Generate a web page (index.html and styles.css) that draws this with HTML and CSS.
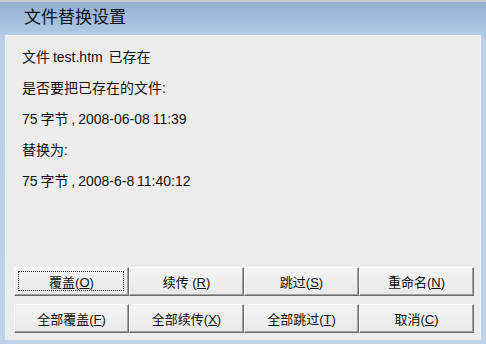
FILE: index.html
```html
<!DOCTYPE html>
<html lang="zh-CN">
<head>
    <meta charset="UTF-8">
    <title>文件替换设置</title>
    <link rel="stylesheet" href="styles.css">
</head>
<body>

    <div class="window">
        <div class="title-bar">文件替换设置</div>

        <div class="panel">
            <div class="messages">
                <p>文件 test.htm &nbsp;已存在</p>
                <p>是否要把已存在的文件:</p>
                <p>75 字节 , 2008-06-08 11:39</p>
                <p>替换为:</p>
                <p>75 字节 , 2008-6-8 11:40:12</p>
            </div>

            <!-- Action buttons -->
            <div class="buttons">
                <button class="btn focused">覆盖(<u>O</u>)</button>
                <button class="btn">续传 (<u>R</u>)</button>
                <button class="btn">跳过(<u>S</u>)</button>
                <button class="btn">重命名(<u>N</u>)</button>
                <button class="btn">全部覆盖(<u>F</u>)</button>
                <button class="btn">全部续传(<u>X</u>)</button>
                <button class="btn">全部跳过(<u>T</u>)</button>
                <button class="btn">取消(<u>C</u>)</button>
            </div>
        </div>
    </div>

</body>
</html>
```

FILE: styles.css
```css
body {
    margin: 0;
    padding: 0;
    font-family: 'Liberation Sans', 'Noto Sans CJK SC', sans-serif;
    background-color: #bcd3ea;
}

.window {
    width: 486px;
    height: 344px;
    display: flex;
    flex-direction: column;
    border-top: 2px solid #c9cbcf;
    box-sizing: border-box;
    background: linear-gradient(to bottom, #93afd1 0px, #a9c3e2 25px, #b9d1ea 40px, #bcd3ea 100%);
}

.title-bar {
    height: 33px;
    line-height: 31px;
    padding-left: 24px;
    font-size: 17px;
    color: #111;
    flex-shrink: 0;
}

.panel {
    flex: 1;
    margin: 0 5px 4px 5px;
    background-color: #ececec;
    border-top: 1px solid #f4f4f4;
    border-right: 1px solid #f6f6f6;
    display: flex;
    flex-direction: column;
}

.messages {
    padding: 6px 0 0 17px;
    flex: 1;
}

.messages p {
    margin: 0;
    height: 31px;
    line-height: 31px;
    font-size: 14px;
    word-spacing: -1px;
    color: #111;
}

.buttons {
    display: grid;
    grid-template-columns: repeat(4, 1fr);
    grid-auto-rows: 29px;
    row-gap: 8px;
    padding: 0 6px 7px 9px;
}

.btn {
    font-family: inherit;
    font-size: 13px;
    color: #111;
    background: linear-gradient(to bottom, #f4f4f4, #e8e8e8);
    border: 1px solid;
    border-color: #ffffff #6a6a6a #6a6a6a #ffffff;
    box-shadow: inset -1px -1px 0 #a0a0a0;
    padding: 0;
    margin: 0;
}

.btn.focused {
    position: relative;
}

.btn.focused::after {
    content: '';
    position: absolute;
    top: 3px;
    left: 3px;
    right: 4px;
    bottom: 4px;
    border: 1px dotted #222;
}
```
